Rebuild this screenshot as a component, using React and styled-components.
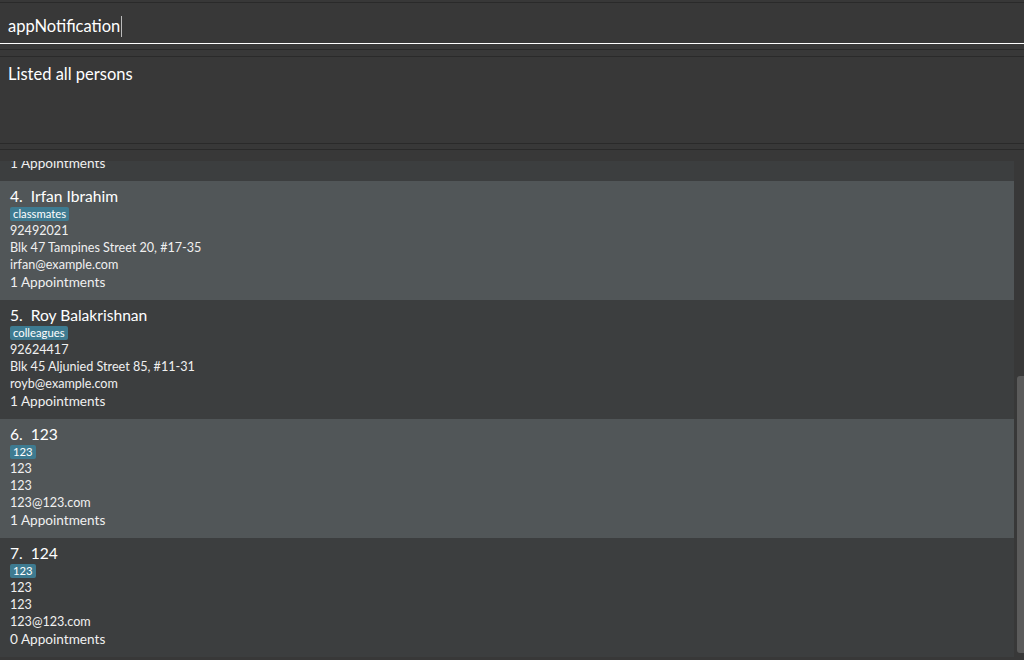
import { useEffect, useRef } from 'react';
import styled, { createGlobalStyle } from 'styled-components';

const GlobalStyle = createGlobalStyle`
  html, body {
    margin: 0;
    padding: 0;
    background: #383838;
    font-family: Lato, "Open Sans", sans-serif;
    color: #fff;
  }
  * {
    box-sizing: border-box;
  }
`;

const persons = [
  { name: 'Alex Yeoh', tag: 'friends', phone: '87438807', address: 'Blk 30 Geylang Street 29, #06-40', email: 'alexyeoh@example.com', appts: 1 },
  { name: 'Bernice Yu', tag: 'colleagues', phone: '99272758', address: 'Blk 30 Lorong 3 Serangoon Gardens, #07-18', email: 'berniceyu@example.com', appts: 1 },
  { name: 'David Li', tag: 'family', phone: '91031282', address: 'Blk 436 Serangoon Gardens Street 26, #16-43', email: 'lidavid@example.com', appts: 1 },
  { name: 'Irfan Ibrahim', tag: 'classmates', phone: '92492021', address: 'Blk 47 Tampines Street 20, #17-35', email: 'irfan@example.com', appts: 1 },
  { name: 'Roy Balakrishnan', tag: 'colleagues', phone: '92624417', address: 'Blk 45 Aljunied Street 85, #11-31', email: 'royb@example.com', appts: 1 },
  { name: '123', tag: '123', phone: '123', address: '123', email: '123@123.com', appts: 1 },
  { name: '124', tag: '123', phone: '123', address: '123', email: '123@123.com', appts: 0 },
];

function App() {
  const listRef = useRef(null);

  useEffect(() => {
    // list is scrolled all the way down in the screenshot
    if (listRef.current) listRef.current.scrollTop = listRef.current.scrollHeight;
  }, []);

  return (
    <Window>
      <GlobalStyle />
      <CommandPane>
        <CommandBox>
          <CommandText>appNotification</CommandText>
          <Caret />
        </CommandBox>
      </CommandPane>
      <ResultPane>Listed all persons</ResultPane>
      <ListPane>
        <PersonList ref={listRef}>
          {persons.map((p, i) => (
            <PersonCard key={i} $alt={i % 2 === 1}>
              <Name>
                {i + 1}.{'  '}{p.name}
              </Name>
              <Tags>
                <Tag>{p.tag}</Tag>
              </Tags>
              <Detail>{p.phone}</Detail>
              <Detail>{p.address}</Detail>
              <Detail>{p.email}</Detail>
              <Appointments>{p.appts} Appointments</Appointments>
            </PersonCard>
          ))}
        </PersonList>
        <ScrollTrack>
          <ScrollThumb />
        </ScrollTrack>
      </ListPane>
    </Window>
  );
}

export default App;

const Window = styled.div`
  width: 1024px;
  height: 660px;
  display: flex;
  flex-direction: column;
  overflow: hidden;
  background: #383838;
`;

const CommandPane = styled.div`
  margin-top: 2px;
  border-top: 1px solid #2a2a2a;
  border-bottom: 1px solid #2a2a2a;
  height: 48px;
`;

const CommandBox = styled.div`
  height: 41px;
  border-bottom: 1px solid #ffffff;
  display: flex;
  align-items: center;
  padding: 6px 0 0 8px;
  font-size: 16.5px;
`;

const CommandText = styled.span`
  color: #fff;
`;

const Caret = styled.span`
  display: inline-block;
  width: 1px;
  height: 21px;
  margin-left: 1px;
  background: #bbb;
`;

const ResultPane = styled.div`
  margin-top: 6px;
  height: 88px;
  border-top: 1px solid #2a2a2a;
  border-bottom: 1px solid #2a2a2a;
  padding: 7px 8px;
  font-size: 16.5px;
  color: #fff;
`;

const ListPane = styled.div`
  margin-top: 5px;
  border-top: 1px solid #2a2a2a;
  padding-top: 11px;
  height: 508px;
  display: flex;
`;

const PersonList = styled.div`
  flex: 1;
  height: 496px;
  overflow-y: scroll;
  background: #3c3e3f;
  scrollbar-width: none;

  &::-webkit-scrollbar {
    display: none;
  }
`;

const ScrollTrack = styled.div`
  width: 10px;
  height: 496px;
  background: #383838;
  padding: 215px 0 4px 3px;
  display: flex;
  flex-direction: column;
`;

const ScrollThumb = styled.div`
  height: 277px;
  background: #5b5b5b;
  border-radius: 3px 0 0 3px;
`;

const PersonCard = styled.div`
  height: 119px;
  padding: 5px 10px 0 10px;
  background: ${(p) => (p.$alt ? '#515658' : '#3c3e3f')};
  display: flex;
  flex-direction: column;
  align-items: flex-start;
`;

const Name = styled.div`
  font-size: 15.6px;
  line-height: 20px;
  color: #fff;
  white-space: pre;
`;

const Tags = styled.div`
  display: flex;
  gap: 4px;
  margin: 1px 0 1px 0;
`;

const Tag = styled.span`
  background: #3e7b91;
  color: #fff;
  font-size: 11.3px;
  line-height: 14px;
  padding: 0 3px;
  border-radius: 2px;
`;

const Detail = styled.div`
  font-size: 12.6px;
  line-height: 17px;
  color: #f0f0f0;
`;

const Appointments = styled.div`
  font-size: 13.6px;
  line-height: 18px;
  color: #f0f0f0;
`;
